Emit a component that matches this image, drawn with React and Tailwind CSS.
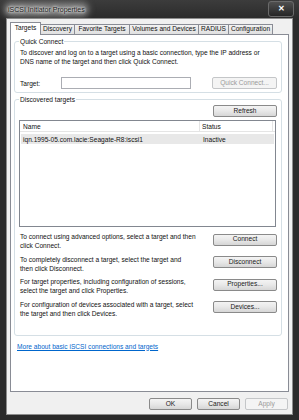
import React from 'react'

const tabs = [
  { name: 'Targets', w: 'w-[31px]', active: true },
  { name: 'Discovery', w: 'w-[35px]' },
  { name: 'Favorite Targets', w: 'w-[56px]' },
  { name: 'Volumes and Devices', w: 'w-[70px]' },
  { name: 'RADIUS', w: 'w-[31px]' },
  { name: 'Configuration', w: 'w-[45px]' },
]

const actions = [
  { lines: ['To connect using advanced options, select a target and then', 'click Connect.'], label: 'Connect' },
  { lines: ['To completely disconnect a target, select the target and', 'then click Disconnect.'], label: 'Disconnect' },
  { lines: ['For target properties, including configuration of sessions,', 'select the target and click Properties.'], label: 'Properties...' },
  { lines: ['For configuration of devices associated with a target, select', 'the target and then click Devices.'], label: 'Devices...' },
]

// Win7 style push button
const Button = ({ children, disabled, className = '' }) => (
  <div
    className={`flex items-center justify-center h-[12px] rounded-[2px] border text-[6.6px] leading-none ${
      disabled
        ? 'bg-[#f4f4f4] border-[#c4c6c8] text-[#9a9a9a]'
        : 'bg-gradient-to-b from-[#f4f4f4] via-[#e8e8e8] to-[#d6d6d6] border-[#8a8a8a] text-[#1a1a1a]'
    } ${className}`}
  >
    {children}
  </div>
)

export default function App() {
  return (
    <div className="w-[299px] h-[420px] bg-[#2a2a2a] flex flex-col font-['Liberation_Sans',Arial,sans-serif] text-[#111] overflow-hidden">
      {/* Title bar */}
      <div className="h-[19px] flex items-start bg-gradient-to-b from-[#3c3c3c] to-[#2b2b2b]">
        <span className="mt-[5px] ml-[7px] px-[1px] text-[7px] leading-[9px] text-[#1a1a1a] bg-[#9a9a9a]/60 rounded-[4px] shadow-[0_0_6px_3px_rgba(170,170,170,0.6)] [text-shadow:0_0_3px_#fff,0_0_3px_#fff,0_0_6px_#ddd]">
          iSCSI Initiator Properties
        </span>
        <div className="ml-auto mr-[5px] mt-[1px] w-[26px] h-[16px] rounded-[3px] border border-[#6a6a6a] bg-gradient-to-b from-[#505050] to-[#262626] flex items-center justify-center text-white text-[8px] font-bold">
          ✕
        </div>
      </div>

      {/* Client area */}
      <div className="mx-[6px] mb-[5px] flex-1 bg-[#f0f0f0] flex flex-col pt-[3px] px-[3px] border border-[#8c8c8c] -mt-px">
        {/* Tabs */}
        <div className="flex items-end h-[12px] relative z-10">
          {tabs.map((t, i) => (
            <div
              key={t.name}
              className={`${t.w} flex items-center justify-center text-[6.6px] leading-none whitespace-nowrap border border-b-0 border-[#898c95] ${
                i > 0 ? '-ml-px' : ''
              } ${
                t.active
                  ? 'h-[13px] bg-white -mb-px relative z-10 pb-[2px]'
                  : 'h-[10px] bg-gradient-to-b from-[#f2f2f2] to-[#e0e0e0]'
              }`}
            >
              {t.name}
            </div>
          ))}
        </div>

        {/* Tab panel */}
        <div className="h-[358px] bg-white border border-[#898c95] pl-[3px] pr-[6px] pt-[2px] text-[6.6px] leading-[9px]">
          {/* Quick Connect */}
          <fieldset className="border border-[#d5dfe5] rounded-[3px] pl-[5px] pr-[4px] pb-[3px]">
            <legend className="px-[1px] -ml-[1px] leading-[9px]">Quick Connect</legend>
            <p className="mt-[2px] whitespace-nowrap">
              To discover and log on to a target using a basic connection, type the IP address or
              <br />
              DNS name of the target and then click Quick Connect.
            </p>
            <div className="mt-[11px] flex items-center h-[12px]">
              <span className="w-[41px]">Target:</span>
              <div className="w-[130px] h-[12px] border border-[#abadb3] bg-white" />
              <Button disabled className="ml-auto w-[65px]">Quick Connect...</Button>
            </div>
          </fieldset>

          {/* Discovered targets */}
          <fieldset className="mt-[2px] border border-[#d5dfe5] rounded-[3px] pl-[4px] pr-[4px] pb-[17px]">
            <legend className="px-[1px] ml-0 leading-[9px]">Discovered targets</legend>
            <div className="mt-[1px] flex justify-end">
              <Button className="w-[64px]">Refresh</Button>
            </div>
            <div className="mt-[3px] mr-[1px] h-[107px] border border-[#828790] bg-white">
              <div className="h-[11px] flex items-center border-b border-[#e5e5e5]">
                <div className="w-[180px] h-full flex items-center pl-[3px] border-r border-[#e5e5e5]">Name</div>
                <div className="flex-1 h-full flex items-center pl-[2px] border-r border-[#e5e5e5]">Status</div>
                <div className="w-[2px]" />
              </div>
              <div className="mt-[2px] mx-[1px] h-[10px] flex items-center bg-[#e8e8e8]">
                <div className="w-[180px] pl-[2px] whitespace-nowrap">iqn.1995-05.com.lacie:Seagate-R8:iscsi1</div>
                <div className="pl-[2px]">Inactive</div>
              </div>
            </div>

            <div className="mt-[5px] flex flex-col gap-[4.5px]">
              {actions.map((a) => (
                <div key={a.label} className="flex items-start h-[18px]">
                  <p className="pl-[1px] whitespace-nowrap">
                    {a.lines[0]}
                    <br />
                    {a.lines[1]}
                  </p>
                  <Button className="ml-auto mt-[1.5px] w-[64px]">{a.label}</Button>
                </div>
              ))}
            </div>
          </fieldset>

          <div className="mt-[6px] ml-[3px]">
            <span className="text-[#0066cc] underline">More about basic iSCSI connections and targets</span>
          </div>
        </div>

        {/* Dialog buttons */}
        <div className="mt-[6px] flex justify-end gap-[5px] pr-[1px]">
          <Button className="w-[43px]">OK</Button>
          <Button className="w-[43px]">Cancel</Button>
          <Button disabled className="w-[43px]">Apply</Button>
        </div>
      </div>
    </div>
  )
}
